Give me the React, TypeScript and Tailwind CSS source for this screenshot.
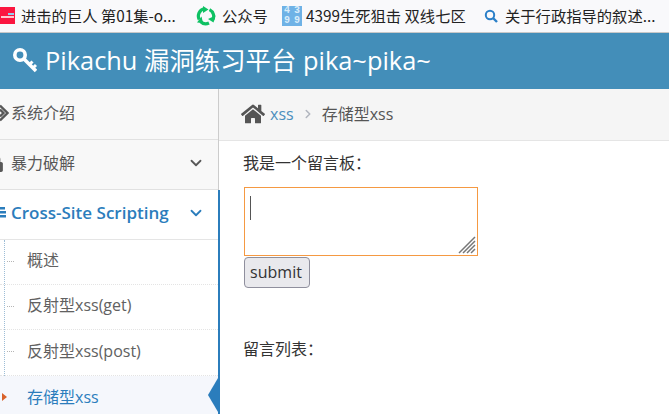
import { FaHome, FaLock } from "react-icons/fa";
import { FiChevronDown, FiChevronRight } from "react-icons/fi";

const font = { fontFamily: '"Open Sans","Noto Sans CJK SC",sans-serif' };

function Bookmarks() {
  return (
    <div className="flex h-[33px] items-center border-b border-[#c8c8c8] bg-[#f9f9fb] pb-[1px] text-[15.3px] text-[#222] whitespace-nowrap" style={{ fontFamily: '"Noto Sans CJK SC","Noto Sans",sans-serif' }}>
      <div className="flex h-[17px] w-[15px] flex-col items-center justify-center bg-[#fb1640]">
        <div className="mb-[1px] ml-[6px] h-[2px] w-[6px] bg-[#8fd0f0]" />
        <div className="h-[2px] w-[13px] bg-[#ffc8d0]" />
      </div>
      <span className="ml-[6px] w-[170px]">进击的巨人 第01集-o...</span>
      <svg className="ml-[5px]" width="20" height="20" viewBox="0 0 20 20" fill="none" stroke="#0fc163" strokeWidth="3.2">
        <path d="M3.2 13.5 A7.5 7.5 0 0 1 8 2.8" />
        <path d="M7 0 L12.5 3.5 L7 7 Z" fill="#0fc163" stroke="none" />
        <path d="M13.5 3.6 A7.5 7.5 0 0 1 16.4 14.5" />
        <path d="M19.5 9.5 L17.5 16.5 L12 13 Z" fill="#0fc163" stroke="none" />
        <path d="M13 17 A7.5 7.5 0 0 1 4.5 15.5" />
        <path d="M1 16.5 L5.5 10.5 L7 17 Z" fill="#0fc163" stroke="none" />
      </svg>
      <span className="ml-[6px] w-[60px]">公众号</span>
      <div className="grid h-5 w-5 grid-cols-2 bg-[#6fb2e6] text-center font-mono text-[10px] font-bold leading-[10px] text-[#d8ecfa]">
        <span>4</span><span>3</span><span>9</span><span>9</span>
      </div>
      <span className="ml-[4px] w-[178px]">4399生死狙击 双线七区</span>
      <svg width="14" height="14" viewBox="0 0 14 14" fill="none">
        <circle cx="6" cy="6" r="4.2" stroke="#2a7fc8" strokeWidth="2" />
        <path d="M9 9 L13 13" stroke="#2a7fc8" strokeWidth="2.4" />
      </svg>
      <span className="ml-[7px]">关于行政指导的叙述...</span>
    </div>
  );
}

function Header() {
  return (
    <div className="flex h-[56px] items-center bg-[#438eb9] pb-[2px] pl-[12px] text-[25.4px] leading-[30px] text-white">
      <svg className="mb-[1px] mr-[8px]" width="25" height="26" viewBox="0 0 25 26" fill="none" stroke="white">
        <circle cx="8" cy="8" r="5.2" strokeWidth="3.6" />
        <path d="M11.5 11.5 L24 24" strokeWidth="3.6" />
        <path d="M17 18 L20.5 14.5 M20.5 21.5 L24 18" strokeWidth="3" />
      </svg>
      <span className="whitespace-nowrap">Pikachu 漏洞练习平台 pika~pika~</span>
    </div>
  );
}

function Top({ icon, label, chevron, active, first, iconPad }: { icon: React.ReactNode; label: string; chevron?: boolean; active?: boolean; first?: boolean; iconPad: string }) {
  return (
    <div className={`flex items-center border-b pr-[13px] ${first ? "h-[51px] pb-[3px]" : "h-[50px] pb-[4px]"} ${active ? "border-[#e5e5e5] bg-white text-[17px] font-semibold text-[#2b7dbc]" : "border-[#e1e1e1] bg-[#f8f8f8] text-[16px] text-[#585858]"}`}>
      <span className={`flex w-[11px] shrink-0 justify-end ${iconPad}`}>{icon}</span>
      <span className="flex-1 whitespace-nowrap">{label}</span>
      {chevron && <FiChevronDown className="h-[18px] w-[18px]" strokeWidth={2.4} />}
    </div>
  );
}

function Sub({ label, tall }: { label: string; tall?: boolean }) {
  return (
    <div className={`relative flex items-center border-b border-dotted border-[#e4e4e4] pb-[4px] pl-[27px] text-[16px] text-[#616161] ${tall ? "h-[46px]" : "h-[45px]"}`}>
      <span className="absolute left-[7px] top-[21px] w-[7px] border-t border-dotted border-[#b5b5b5]" />
      {label}
    </div>
  );
}

function ActiveSub({ label }: { label: string }) {
  return (
    <div className="relative flex h-[38px] items-center bg-[#f5f7fc] pl-[27px] pt-[4px] text-[16px] text-[#2b7dbc]">
      {label}
      <span className="absolute left-[2px] top-[17px] h-0 w-0 border-y-[4px] border-l-[5px] border-y-transparent border-l-[#d9622b]" />
      <span className="absolute right-0 top-[2px] h-0 w-0 border-y-[17px] border-r-[10px] border-y-transparent border-r-[#2b7dbc]" />
    </div>
  );
}

function Sidebar() {
  return (
    <div className="h-[325px] w-[220px] shrink-0 overflow-hidden">
      <div className="h-[101px] w-[219px] border-r border-[#cccccc]">
        <Top
          first
          iconPad="pr-[2px]"
          label="系统介绍"
          icon={
            <svg className="shrink-0" width="9" height="18" viewBox="0 0 9 18" fill="none" stroke="#585858" strokeWidth="2.4">
              <path d="M0 1.5 L7.5 9 L0 16.5" />
              <path d="M0 5.5 L3.5 9 L0 12.5" />
            </svg>
          }
        />
        <Top iconPad="pr-[7px]" label="暴力破解" chevron icon={<FaLock className="h-[18px] w-[18px] shrink-0 text-[#585858]" />} />
      </div>
      <div className="h-[224px] border-r-2 border-[#2b7dbc]">
        <Top
          iconPad="pr-[5px]"
          active
          label="Cross-Site Scripting"
          chevron
          icon={
            <svg className="shrink-0" width="6" height="11" viewBox="0 0 6 11" fill="#2b7dbc">
              <rect x="0" y="0" width="5" height="2.5" />
              <rect x="0" y="4" width="6" height="2.5" />
              <rect x="0" y="8" width="6" height="2.5" />
            </svg>
          }
        />
        <div className="relative">
          <span className="absolute bottom-0 left-[4px] top-0 border-l border-dotted border-[#9dbdd6]" />
          <Sub label="概述" />
          <Sub label="反射型xss(get)" />
          <Sub label="反射型xss(post)" tall />
          <ActiveSub label="存储型xss" />
        </div>
      </div>
    </div>
  );
}

function Main() {
  return (
    <div className="min-w-0 flex-1 text-[16px] text-[#333]">
      <div className="-ml-[1px] flex h-[52px] items-center border-b border-[#e5e5e5] bg-[#f5f5f5] pb-[2px] pl-[22px]">
        <FaHome className="h-[24px] w-[24px] text-[#555]" />
        <span className="ml-[5px] text-[#4c8fbd]">xss</span>
        <FiChevronRight className="mx-[7px] h-[14px] w-[14px] text-[#b2b6bf]" strokeWidth={2.6} />
        <span className="text-[#555]">存储型xss</span>
      </div>
      <div className="pl-[24px]">
        <p className="ml-[-1px] mt-[12px] h-[20px] leading-[20px]">我是一个留言板：</p>
        <div className="relative mt-[14px] h-[69px] w-[234px] border border-[#f59942] bg-white">
          <span className="absolute left-[5px] top-[8px] h-[24px] w-[1px] bg-[#555]" />
          <svg className="absolute bottom-[1px] right-[1px]" width="18" height="18" viewBox="0 0 18 18" stroke="#777" strokeWidth="1.5">
            <path d="M1 17 L17 1 M5 17 L17 5 M9 17 L17 9 M13 17 L17 13" />
          </svg>
        </div>
        <button className="mt-[1px] block h-[31px] w-[66px] rounded-[4px] border border-[#8f8f9d] bg-[#e9e9ed] pb-[2px] pr-[2px] text-[16px] text-[#333]">submit</button>
        <p className="ml-[-1px] mt-[51px] leading-[20px]">留言列表：</p>
      </div>
    </div>
  );
}

export default function App() {
  return (
    <div className="h-[414px] w-[669px] overflow-hidden bg-white" style={font}>
      <Bookmarks />
      <Header />
      <div className="flex">
        <Sidebar />
        <Main />
      </div>
    </div>
  );
}
